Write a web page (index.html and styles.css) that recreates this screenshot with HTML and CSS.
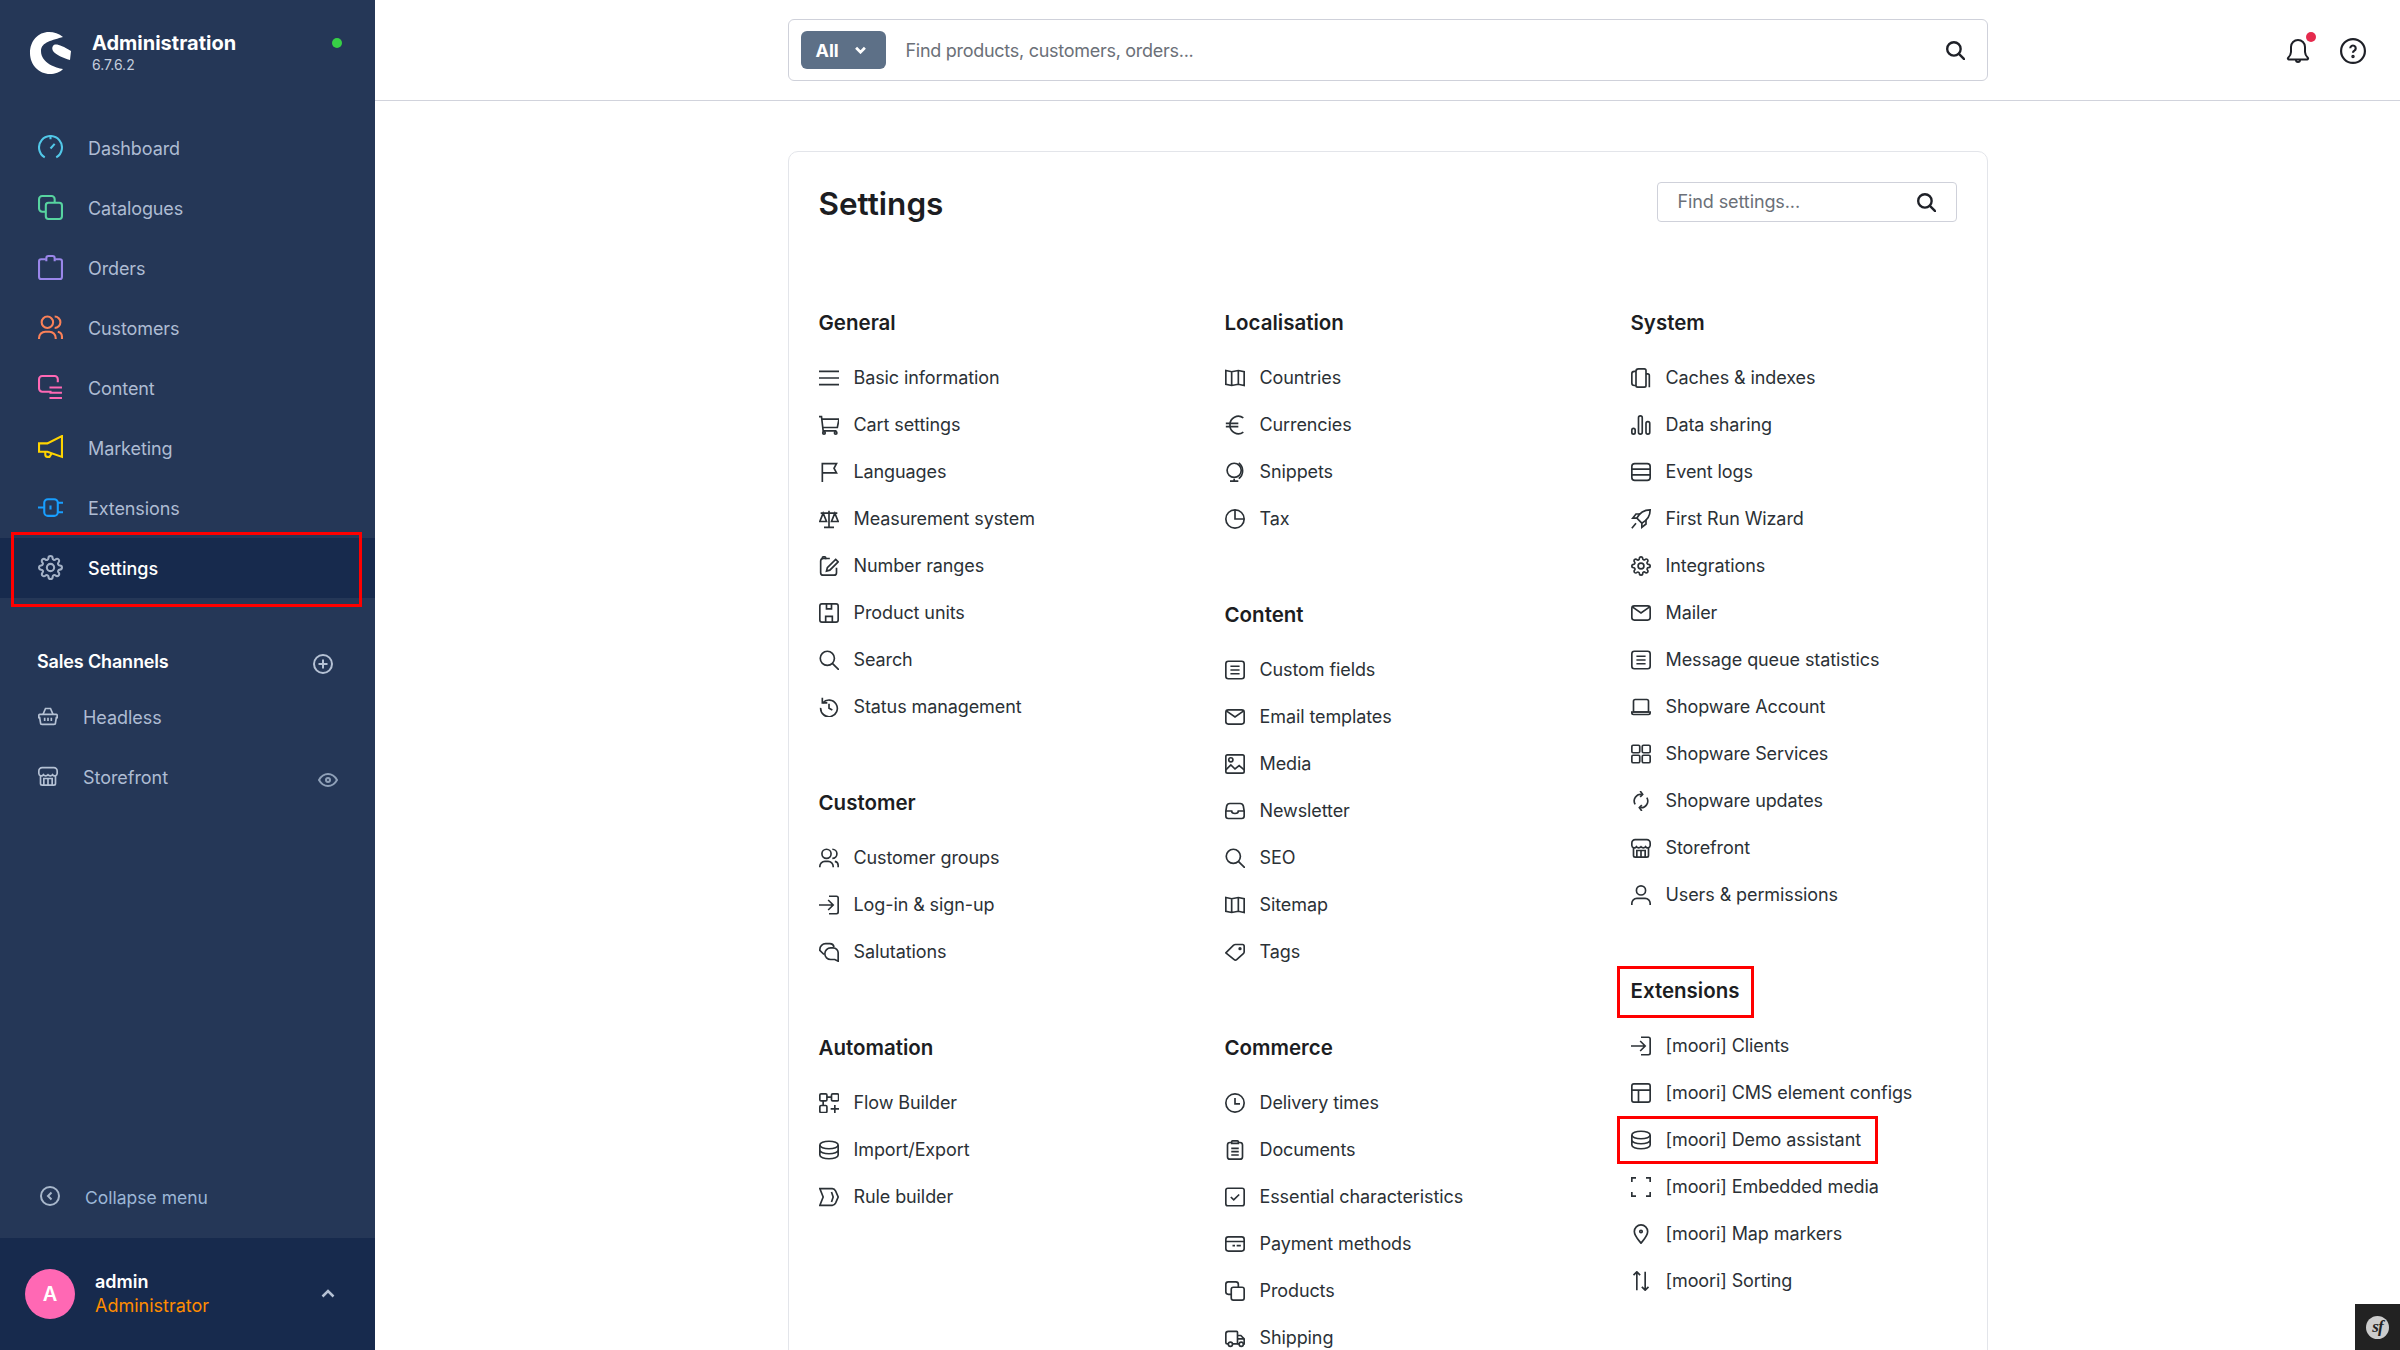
FILE: index.html
```html
<!DOCTYPE html>
<html lang="en">
<head>
<meta charset="utf-8">
<title>Settings | Shopware Administration</title>
<link rel="stylesheet" href="styles.css">
</head>
<body>
<svg class="sprite" aria-hidden="true">
  <symbol id="i-dash" viewBox="0 0 24 24"><path d="M6.500 21.500a11 11 0 1 1 11 0"/><path d="M12 1v3M12 13l4-4.500"/></symbol>
  <symbol id="i-copy" viewBox="0 0 24 24"><rect x="7.500" y="7.500" width="15.500" height="15.500" rx="2.500"/><path d="M16 7.500V4a3 3 0 0 0-3-3H4a3 3 0 0 0-3 3v9a3 3 0 0 0 3 3h3.500"/></symbol>
  <symbol id="i-bag" viewBox="0 0 24 24"><path d="M7.500 4H3a2 2 0 0 0-2 2v15a2 2 0 0 0 2 2h18a2 2 0 0 0 2-2V6a2 2 0 0 0-2-2h-4.500"/><path d="M8 6V3a2 2 0 0 1 2-2h4a2 2 0 0 1 2 2v3"/></symbol>
  <symbol id="i-users" viewBox="0 0 24 24"><circle cx="9" cy="7" r="5.500"/><path d="M16 1.500a5.500 5.500 0 0 1 0 11M1 23v-1a6 6 0 0 1 6-6h4a6 6 0 0 1 6 6v1M19 16a5 5 0 0 1 4 5v2"/></symbol>
  <symbol id="i-content" viewBox="0 0 24 24"><path d="M13 16H4a3 3 0 0 1-3-3V4a3 3 0 0 1 3-3h12a3 3 0 0 1 3 3v3"/><path d="M11 12h12M11 17h12M11 22h12"/></symbol>
  <symbol id="i-mega" viewBox="0 0 24 24"><path d="M23 1v20L9 16H1V8h8z"/><path d="M7 16v3a2 2 0 0 0 2 2h2l2-3"/></symbol>
  <symbol id="i-plug" viewBox="0 0 24 24"><rect x="6" y="4" width="13" height="16" rx="3.500"/><path d="M0 12h6M19 7.500h5M19 16.500h5M12 10v4"/></symbol>
  <symbol id="i-gear" viewBox="0 0 24 24"><circle cx="12" cy="12" r="3.500"/><path d="M19.400 15a1.650 1.650 0 0 0 .33 1.820l.06.06a2 2 0 0 1 0 2.830 2 2 0 0 1-2.830 0l-.06-.06a1.650 1.650 0 0 0-1.820-.33 1.650 1.650 0 0 0-1 1.510V21a2 2 0 0 1-2 2 2 2 0 0 1-2-2v-.09A1.650 1.650 0 0 0 9 19.400a1.650 1.650 0 0 0-1.820.33l-.06.06a2 2 0 0 1-2.830 0 2 2 0 0 1 0-2.830l.06-.06a1.650 1.650 0 0 0 .33-1.820 1.650 1.650 0 0 0-1.510-1H3a2 2 0 0 1-2-2 2 2 0 0 1 2-2h.09A1.650 1.650 0 0 0 4.600 9a1.650 1.650 0 0 0-.33-1.820l-.06-.06a2 2 0 0 1 0-2.830 2 2 0 0 1 2.830 0l.06.06a1.650 1.650 0 0 0 1.820.33H9a1.650 1.650 0 0 0 1-1.510V3a2 2 0 0 1 2-2 2 2 0 0 1 2 2v.09a1.650 1.650 0 0 0 1 1.510 1.650 1.650 0 0 0 1.820-.33l.06-.06a2 2 0 0 1 2.830 0 2 2 0 0 1 0 2.830l-.06.06a1.650 1.650 0 0 0-.33 1.820V9a1.650 1.650 0 0 0 1.510 1H21a2 2 0 0 1 2 2 2 2 0 0 1-2 2h-.09a1.650 1.650 0 0 0-1.510 1z"/></symbol>
  <symbol id="i-basket" viewBox="0 0 24 24"><path d="M2 10h20a1 1 0 0 1 1 1v3h-1l-1 6a2 2 0 0 1-2 2H5a2 2 0 0 1-2-2l-1-6H1v-3a1 1 0 0 1 1-1z"/><path d="M6 10l3-7h6l3 7M8 14v4M12 14v4M16 14v4"/></symbol>
  <symbol id="i-store" viewBox="0 0 24 24"><path d="M3 12v9a2 2 0 0 0 2 2h14a2 2 0 0 0 2-2v-9"/><path d="M1 6a4 4 0 0 1 4-4h14a4 4 0 0 1 4 4v3a3 3 0 0 1-5.500 1.500 3.500 3.500 0 0 1-5.500 0 3.500 3.500 0 0 1-5.500 0A3 3 0 0 1 1 9z"/><path d="M7 23v-8h10v8M12 15v8"/></symbol>
  <symbol id="i-menu" viewBox="0 0 24 24"><path d="M0 4h24M0 12h24M0 20h24"/></symbol>
  <symbol id="i-cart" viewBox="0 0 24 24"><path d="M0 2h3l2 17h16M4 5h20l-2 10H5"/><circle cx="6" cy="21.500" r="1.500"/><circle cx="20" cy="21.500" r="1.500"/></symbol>
  <symbol id="i-flag" viewBox="0 0 24 24"><path d="M4 24V2h17l-3 5.500 3 5.500H4"/></symbol>
  <symbol id="i-scale" viewBox="0 0 24 24"><path d="M12 2v19M6 22h12M2 5h20M5 5L1 15h8zM19 5l-4 10h8z"/></symbol>
  <symbol id="i-note" viewBox="0 0 24 24"><path d="M13 3H5a3 3 0 0 0-3 3v14a3 3 0 0 0 3 3h13a3 3 0 0 0 3-3v-6"/><path d="M4 4V2a1 1 0 0 1 1-1h2a1 1 0 0 1 1 1v2"/><path d="M20 4l3 3-10 10-4 1 1-4z"/></symbol>
  <symbol id="i-box" viewBox="0 0 24 24"><rect x="1" y="1" width="22" height="22" rx="2.500"/><path d="M9 1v6h6V1M8 23v-7h8v7"/></symbol>
  <symbol id="i-search" viewBox="0 0 24 24"><circle cx="10" cy="10" r="8.500"/><path d="M16 16l8 8"/></symbol>
  <symbol id="i-history" viewBox="0 0 24 24"><path d="M4 1v6h6"/><path d="M4.500 7A10 10 0 1 1 2 13"/><path d="M12 8v5.500l4 2"/></symbol>
  <symbol id="i-login" viewBox="0 0 24 24"><path d="M0 12h17M11 6l6 6-6 6"/><path d="M12 1.500h9a2 2 0 0 1 2 2v17a2 2 0 0 1-2 2h-9"/></symbol>
  <symbol id="i-chat" viewBox="0 0 24 24"><path d="M18 6a5 5 0 0 0-5-4H8a7 7 0 0 0-7 7v1l5 5"/><path d="M14 7h3a6 6 0 0 1 6 6v10l-4-2h-5a7 7 0 0 1 0-14z"/></symbol>
  <symbol id="i-flow" viewBox="0 0 24 24"><rect x="1" y="1" width="8.500" height="8.500" rx="1.500"/><rect x="15" y="1" width="8.500" height="8.500" rx="1.500"/><rect x="1" y="15" width="8.500" height="8.500" rx="1.500"/><path d="M5 9.500V15M9.500 5H15M19 14.500V24M14 19h10"/></symbol>
  <symbol id="i-db" viewBox="0 0 24 24"><ellipse cx="12" cy="6" rx="11" ry="4.500"/><path d="M1 6v12c0 2.500 5 4.500 11 4.500s11-2 11-4.500V6M1 12c0 2.500 5 4.500 11 4.500s11-2 11-4.500"/></symbol>
  <symbol id="i-rule" viewBox="0 0 24 24"><path d="M1 2h15c2 0 3 1 4 3l3 7-3 7c-1 2-2 3-4 3H1l4-10z"/><path d="M15 6l2 6-2 6"/></symbol>
  <symbol id="i-map" viewBox="0 0 24 24"><path d="M1 3l7 1.500L16 3l7 1.500V21l-7-1.500L8 21l-7-1.500zM8 4.500V21M16 3v16.500"/></symbol>
  <symbol id="i-euro" viewBox="0 0 24 24"><path d="M22 3.500A10 10 0 0 0 6 12a10 10 0 0 0 16 8.500"/><path d="M1 10h15M1 14h15"/></symbol>
  <symbol id="i-globe" viewBox="0 0 24 24"><circle cx="11" cy="10" r="8.500"/><path d="M16.500 1a12 12 0 0 1 0 19M11 20v3M6 23h10"/></symbol>
  <symbol id="i-pie" viewBox="0 0 24 24"><circle cx="12" cy="12" r="11"/><path d="M12 1v11h11"/></symbol>
  <symbol id="i-list" viewBox="0 0 24 24"><rect x="1" y="1.500" width="22" height="21" rx="3"/><path d="M6.500 7.500h11M6.500 12h11M6.500 16.500h11"/></symbol>
  <symbol id="i-mail" viewBox="0 0 24 24"><rect x="1" y="3.500" width="22" height="17" rx="3"/><path d="M2 5l10 7 10-7"/></symbol>
  <symbol id="i-image" viewBox="0 0 24 24"><rect x="1" y="1" width="22" height="22" rx="2"/><circle cx="7" cy="7" r="2.500"/><path d="M1 19l6-6 5 5 5-4 6 5"/></symbol>
  <symbol id="i-inbox" viewBox="0 0 24 24"><path d="M6 3h12a4 4 0 0 1 4 3l1 6v6a3 3 0 0 1-3 3H4a3 3 0 0 1-3-3v-6l1-6a4 4 0 0 1 4-3z"/><path d="M1 12h7c0 2 2 3 4 3s4-1 4-3h7"/></symbol>
  <symbol id="i-tag" viewBox="0 0 24 24"><path d="M1 13L10 4a4 4 0 0 1 3-1h8a2 2 0 0 1 2 2v7a3 3 0 0 1-1 2l-8 7a2 2 0 0 1-3 0z"/><circle cx="18" cy="8" r="1"/></symbol>
  <symbol id="i-clock" viewBox="0 0 24 24"><circle cx="12" cy="12" r="11"/><path d="M12 6v7h6"/></symbol>
  <symbol id="i-doc" viewBox="0 0 24 24"><path d="M8 3H6a3 3 0 0 0-3 3v14a3 3 0 0 0 3 3h12a3 3 0 0 0 3-3V6a3 3 0 0 0-3-3h-2"/><path d="M8 4V2a1 1 0 0 1 1-1h6a1 1 0 0 1 1 1v2zM7.500 10h9M7.500 14h9M7.500 18h9"/></symbol>
  <symbol id="i-check" viewBox="0 0 24 24"><rect x="1" y="1.500" width="22" height="21" rx="2.500"/><path d="M7 12l3.500 3.500L17 9"/></symbol>
  <symbol id="i-card" viewBox="0 0 24 24"><rect x="1" y="3.500" width="22" height="17" rx="3"/><path d="M1 9h22M9 14h3M14 14h5"/></symbol>
  <symbol id="i-truck" viewBox="0 0 24 24"><path d="M4 19H3a2 2 0 0 1-2-2V7a3 3 0 0 1 3-3h10a1 1 0 0 1 1 1v14H9"/><path d="M15 9h4l4 4v6h-1M15 13h8M15 19h2"/><circle cx="6.500" cy="19.500" r="2.500"/><circle cx="19.500" cy="19.500" r="2.500"/></symbol>
  <symbol id="i-caches" viewBox="0 0 24 24"><path d="M6 4a3 3 0 0 1 3-3h7a2 2 0 0 1 2 2v18a2 2 0 0 1-2 2H8a2 2 0 0 1-2-2z"/><path d="M6 4H4a3 3 0 0 0-3 3v11a3 3 0 0 0 3 3h2M18 7h2a2 2 0 0 1 2 2v14"/></symbol>
  <symbol id="i-bars" viewBox="0 0 24 24"><rect x="1" y="16" width="4" height="7" rx="2"/><rect x="9" y="1" width="4.500" height="22" rx="2.200"/><rect x="18" y="8" width="4.500" height="15" rx="2.200"/></symbol>
  <symbol id="i-server" viewBox="0 0 24 24"><rect x="1" y="2" width="22" height="20" rx="3.500"/><path d="M1 8.500h22M1 15.500h22"/></symbol>
  <symbol id="i-rocket" viewBox="0 0 24 24"><path d="M23 1C15 1 10 5 7 11l6 6c6-3 10-8 10-16z"/><path d="M7 11H2l4-5h5M13 17v5l5-4v-5M6 17l-5 6"/></symbol>
  <symbol id="i-laptop" viewBox="0 0 24 24"><path d="M5 3h14a2 2 0 0 1 2 2v13H3V5a2 2 0 0 1 2-2z"/><path d="M1 18h22v1a2 2 0 0 1-2 2H3a2 2 0 0 1-2-2z"/></symbol>
  <symbol id="i-grid" viewBox="0 0 24 24"><rect x="1" y="1.500" width="9.500" height="9" rx="1.500"/><rect x="13.500" y="1.500" width="9.500" height="9" rx="1.500"/><rect x="1" y="13.500" width="9.500" height="9" rx="1.500"/><rect x="13.500" y="13.500" width="9.500" height="9" rx="1.500"/></symbol>
  <symbol id="i-sync" viewBox="0 0 24 24"><path d="M5 16A8 8 0 0 1 13 4"/><path d="M11 0l3 4-3 3"/><path d="M19 8a8 8 0 0 1-8 12"/><path d="M13 17l-3 3 3 4"/></symbol>
  <symbol id="i-user" viewBox="0 0 24 24"><circle cx="12" cy="6.500" r="5.500"/><path d="M1 24v-2a6 6 0 0 1 6-6h10a6 6 0 0 1 6 6v2"/></symbol>
  <symbol id="i-layout" viewBox="0 0 24 24"><rect x="1" y="1" width="22" height="22" rx="2.500"/><path d="M1 8.500h22M9 8.500V23"/></symbol>
  <symbol id="i-corners" viewBox="0 0 24 24"><path d="M1 6V1h5M18 1h5v5M1 18v5h5M23 18v5h-5"/></symbol>
  <symbol id="i-pin" viewBox="0 0 24 24"><path d="M12 23c-4-5-8-9-8-14a8 8 0 0 1 16 0c0 5-4 9-8 14z"/><circle cx="12" cy="9" r="1.500"/></symbol>
  <symbol id="i-sort" viewBox="0 0 24 24"><path d="M7 23V1M3 5l4-4 4 4M17 1v22M13 19l4 4 4-4"/></symbol>
</svg>

<aside class="sidebar">
  <div class="brand">
    <svg class="logo" viewBox="0 0 42 43"><path d="M34 6C30 2.500 25 1 20 1 9 1 1 10 1 22s9 21 20 21c5 0 10-1.500 13-5-7-1-22-6-22-18C12 11 24 9 34 6zM24 15c2-3 8-1 18 5l-1 9c-7-2-14-5-17-9-1-2-1-4 0-5z"/></svg>
    <div class="brand-text">
      <div class="brand-name">Administration</div>
      <div class="brand-version">6.7.6.2</div>
    </div>
    <span class="status-dot"></span>
  </div>
  <nav class="nav">
    <a class="nav-item"><svg class="nav-icon c-dash"><use href="#i-dash"/></svg>Dashboard</a>
    <a class="nav-item"><svg class="nav-icon c-cat"><use href="#i-copy"/></svg>Catalogues</a>
    <a class="nav-item"><svg class="nav-icon c-ord"><use href="#i-bag"/></svg>Orders</a>
    <a class="nav-item"><svg class="nav-icon c-cus"><use href="#i-users"/></svg>Customers</a>
    <a class="nav-item"><svg class="nav-icon c-con"><use href="#i-content"/></svg>Content</a>
    <a class="nav-item"><svg class="nav-icon c-mar"><use href="#i-mega"/></svg>Marketing</a>
    <a class="nav-item"><svg class="nav-icon c-ext"><use href="#i-plug"/></svg>Extensions</a>
    <a class="nav-item is-active mark mark-nav"><svg class="nav-icon c-set"><use href="#i-gear"/></svg>Settings</a>
  </nav>
  <div class="channels-head">
    <span>Sales Channels</span>
    <svg class="plus" viewBox="0 0 20 20"><circle cx="10" cy="10" r="9"/><path d="M10 5.500v9M5.500 10h9"/></svg>
  </div>
  <a class="channel"><svg class="channel-icon"><use href="#i-basket"/></svg>Headless</a>
  <a class="channel"><svg class="channel-icon"><use href="#i-store"/></svg>Storefront<svg class="eye" viewBox="0 0 20 14"><path d="M1 7c2-3.500 5-6 9-6s7 2.500 9 6c-2 3.500-5 6-9 6s-7-2.500-9-6z"/><circle cx="10" cy="7" r="2"/></svg></a>
  <a class="collapse"><svg class="collapse-icon" viewBox="0 0 20 20"><circle cx="10" cy="10" r="9"/><path d="M11.500 6.500L8 10l3.500 3.500"/></svg>Collapse menu</a>
  <div class="account">
    <div class="avatar">A</div>
    <div class="account-text">
      <div class="account-name">admin</div>
      <div class="account-role">Administrator</div>
    </div>
    <svg class="account-chevron" viewBox="0 0 14 9"><path d="M1.500 7.500L7 2l5.500 5.500"/></svg>
  </div>
</aside>

<main class="main">
  <header class="topbar">
    <div class="global-search">
      <div class="scope">All<svg class="scope-chevron" viewBox="0 0 10 7"><path d="M1 1.500l4 4 4-4"/></svg></div>
      <div class="global-placeholder">Find products, customers, orders...</div>
      <svg class="search-icon"><use href="#i-search"/></svg>
    </div>
    <div class="top-actions">
      <div class="bell">
        <svg class="top-icon" viewBox="0 0 24 26"><path d="M2 20c2-2 3-3 3-6V9a7 7 0 0 1 14 0v5c0 3 1 4 3 6a1 1 0 0 1-1 1.500H3A1 1 0 0 1 2 20z"/><path d="M10 22a2 2 0 0 0 4 0"/></svg>
        <span class="bell-dot"></span>
      </div>
      <svg class="top-icon" viewBox="0 0 24 24"><circle cx="12" cy="12" r="11"/><path d="M9.500 9.500a2.500 2.500 0 1 1 3.800 2.100c-.8.500-1.300 1-1.300 2"/><circle class="fill" cx="12" cy="17" r=".6"/></svg>
    </div>
  </header>

  <section class="card">
    <div class="card-head">
      <h1 class="page-title">Settings</h1>
      <div class="settings-search">
        <span class="settings-placeholder">Find settings...</span>
        <svg class="search-icon"><use href="#i-search"/></svg>
      </div>
    </div>
    <div class="columns">
      <div class="column">
        <div class="group">
          <h2 class="group-title">General</h2>
          <a class="item"><svg class="item-icon"><use href="#i-menu"/></svg>Basic information</a>
          <a class="item"><svg class="item-icon"><use href="#i-cart"/></svg>Cart settings</a>
          <a class="item"><svg class="item-icon"><use href="#i-flag"/></svg>Languages</a>
          <a class="item"><svg class="item-icon"><use href="#i-scale"/></svg>Measurement system</a>
          <a class="item"><svg class="item-icon"><use href="#i-note"/></svg>Number ranges</a>
          <a class="item"><svg class="item-icon"><use href="#i-box"/></svg>Product units</a>
          <a class="item"><svg class="item-icon"><use href="#i-search"/></svg>Search</a>
          <a class="item"><svg class="item-icon"><use href="#i-history"/></svg>Status management</a>
        </div>
        <div class="group">
          <h2 class="group-title">Customer</h2>
          <a class="item"><svg class="item-icon"><use href="#i-users"/></svg>Customer groups</a>
          <a class="item"><svg class="item-icon"><use href="#i-login"/></svg>Log-in &amp; sign-up</a>
          <a class="item"><svg class="item-icon"><use href="#i-chat"/></svg>Salutations</a>
        </div>
        <div class="group">
          <h2 class="group-title">Automation</h2>
          <a class="item"><svg class="item-icon"><use href="#i-flow"/></svg>Flow Builder</a>
          <a class="item"><svg class="item-icon"><use href="#i-db"/></svg>Import/Export</a>
          <a class="item"><svg class="item-icon"><use href="#i-rule"/></svg>Rule builder</a>
        </div>
      </div>
      <div class="column">
        <div class="group">
          <h2 class="group-title">Localisation</h2>
          <a class="item"><svg class="item-icon"><use href="#i-map"/></svg>Countries</a>
          <a class="item"><svg class="item-icon"><use href="#i-euro"/></svg>Currencies</a>
          <a class="item"><svg class="item-icon"><use href="#i-globe"/></svg>Snippets</a>
          <a class="item"><svg class="item-icon"><use href="#i-pie"/></svg>Tax</a>
        </div>
        <div class="group">
          <h2 class="group-title">Content</h2>
          <a class="item"><svg class="item-icon"><use href="#i-list"/></svg>Custom fields</a>
          <a class="item"><svg class="item-icon"><use href="#i-mail"/></svg>Email templates</a>
          <a class="item"><svg class="item-icon"><use href="#i-image"/></svg>Media</a>
          <a class="item"><svg class="item-icon"><use href="#i-inbox"/></svg>Newsletter</a>
          <a class="item"><svg class="item-icon"><use href="#i-search"/></svg>SEO</a>
          <a class="item"><svg class="item-icon"><use href="#i-map"/></svg>Sitemap</a>
          <a class="item"><svg class="item-icon"><use href="#i-tag"/></svg>Tags</a>
        </div>
        <div class="group">
          <h2 class="group-title">Commerce</h2>
          <a class="item"><svg class="item-icon"><use href="#i-clock"/></svg>Delivery times</a>
          <a class="item"><svg class="item-icon"><use href="#i-doc"/></svg>Documents</a>
          <a class="item"><svg class="item-icon"><use href="#i-check"/></svg>Essential characteristics</a>
          <a class="item"><svg class="item-icon"><use href="#i-card"/></svg>Payment methods</a>
          <a class="item"><svg class="item-icon"><use href="#i-copy"/></svg>Products</a>
          <a class="item"><svg class="item-icon"><use href="#i-truck"/></svg>Shipping</a>
        </div>
      </div>
      <div class="column">
        <div class="group">
          <h2 class="group-title">System</h2>
          <a class="item"><svg class="item-icon"><use href="#i-caches"/></svg>Caches &amp; indexes</a>
          <a class="item"><svg class="item-icon"><use href="#i-bars"/></svg>Data sharing</a>
          <a class="item"><svg class="item-icon"><use href="#i-server"/></svg>Event logs</a>
          <a class="item"><svg class="item-icon"><use href="#i-rocket"/></svg>First Run Wizard</a>
          <a class="item"><svg class="item-icon"><use href="#i-gear"/></svg>Integrations</a>
          <a class="item"><svg class="item-icon"><use href="#i-mail"/></svg>Mailer</a>
          <a class="item"><svg class="item-icon"><use href="#i-list"/></svg>Message queue statistics</a>
          <a class="item"><svg class="item-icon"><use href="#i-laptop"/></svg>Shopware Account</a>
          <a class="item"><svg class="item-icon"><use href="#i-grid"/></svg>Shopware Services</a>
          <a class="item"><svg class="item-icon"><use href="#i-sync"/></svg>Shopware updates</a>
          <a class="item"><svg class="item-icon"><use href="#i-store"/></svg>Storefront</a>
          <a class="item"><svg class="item-icon"><use href="#i-user"/></svg>Users &amp; permissions</a>
        </div>
        <div class="group">
          <h2 class="group-title mark mark-title">Extensions</h2>
          <a class="item"><svg class="item-icon"><use href="#i-login"/></svg>[moori] Clients</a>
          <a class="item"><svg class="item-icon"><use href="#i-layout"/></svg>[moori] CMS element configs</a>
          <a class="item mark mark-item"><svg class="item-icon"><use href="#i-db"/></svg>[moori] Demo assistant</a>
          <a class="item"><svg class="item-icon"><use href="#i-corners"/></svg>[moori] Embedded media</a>
          <a class="item"><svg class="item-icon"><use href="#i-pin"/></svg>[moori] Map markers</a>
          <a class="item"><svg class="item-icon"><use href="#i-sort"/></svg>[moori] Sorting</a>
        </div>
      </div>
    </div>
  </section>
</main>

<div class="sf-toolbar"><span class="sf-badge">sf</span></div>
</body>
</html>
```

FILE: styles.css
```css
* { box-sizing: border-box; }

html, body {
  height: 100%;
}

body {
  margin: 0;
  height: 1350px;
  display: flex;
  overflow: hidden;
  background: #fff;
  font-family: Inter, "Noto Sans", sans-serif;
  font-size: 18px;
  color: #2b3136;
}

a { color: inherit; text-decoration: none; }
h1, h2 { margin: 0; }

.sprite { display: none; }

svg { fill: none; stroke: currentColor; stroke-width: 2; flex: none; }

/* Sidebar */
.sidebar {
  width: 375px;
  flex: none;
  height: 1350px;
  display: flex;
  flex-direction: column;
  background: #253757;
  color: #aebcd3;
}

.brand {
  height: 118px;
  flex: none;
  display: flex;
  align-items: flex-start;
  padding: 31px 33px 0 29px;
}

.logo { width: 42px; height: 43px; fill: #fff; stroke: none; }

.brand-text { margin-left: 21px; flex: 1; }

.brand-name {
  font-size: 20px;
  font-weight: 700;
  line-height: 24px;
  color: #fff;
}

.brand-version {
  font-size: 14px;
  line-height: 20px;
  color: #c3cede;
}

.status-dot {
  width: 10px;
  height: 10px;
  margin-top: 7px;
  border-radius: 50%;
  background: #37d046;
}

.nav { display: flex; flex-direction: column; }

.nav-item {
  position: relative;
  height: 60px;
  display: flex;
  align-items: center;
  gap: 25px;
  padding-left: 38px;
  letter-spacing: -0.1px;
}

.nav-icon { width: 25px; height: 25px; margin-top: -2px; }
.c-dash { color: #52c8e8; }
.c-cat { color: #57d4a0; }
.c-ord { color: #9a86ea; }
.c-cus { color: #fb8158; }
.c-con { color: #ff68b4; }
.c-mar { color: #ffd400; }
.c-ext { color: #189eff; }
.c-set { color: #a3b1c6; }

.is-active {
  background: #172a4d;
  color: #fff;
  font-weight: 500;
  letter-spacing: 0;
}

.channels-head {
  height: 89px;
  flex: none;
  display: flex;
  align-items: flex-end;
  justify-content: space-between;
  padding: 0 42px 15px 37px;
  font-weight: 600;
  letter-spacing: -0.15px;
  color: #fff;
}

.plus { width: 20px; height: 20px; color: #b5c1d4; margin-bottom: -2px; }

.channel {
  height: 60px;
  flex: none;
  display: flex;
  align-items: center;
  gap: 25px;
  padding: 0 38px;
  letter-spacing: -0.05px;
}

.channel-icon { width: 20px; height: 20px; margin-top: -2px; color: #b5c1d4; }

.eye { width: 20px; height: 14px; margin-left: auto; margin-right: -1px; margin-top: 6px; color: #8fa0b8; }

.collapse {
  margin-top: auto;
  height: 60px;
  flex: none;
  margin-bottom: 11px;
  display: flex;
  align-items: center;
  gap: 25px;
  padding-left: 40px;
  font-size: 17.500px;
  color: #9cb6d6;
}

.collapse-icon { width: 20px; height: 20px; margin-top: -2px; color: #a8b7cb; }

.account {
  height: 112px;
  flex: none;
  display: flex;
  align-items: center;
  padding: 0 40px 0 25px;
  background: #172a4d;
}

.avatar {
  width: 50px;
  height: 50px;
  flex: none;
  border-radius: 50%;
  display: flex;
  align-items: center;
  justify-content: center;
  background: #ff68b4;
  color: #fff;
  font-size: 20px;
  font-weight: 600;
}

.account-text { margin-left: 20px; flex: 1; }

.account-name {
  font-weight: 600;
  line-height: 24px;
  color: #fff;
}

.account-role {
  line-height: 24px;
  color: #ff8c00;
}

.account-chevron { width: 14px; height: 9px; margin-top: -2px; stroke-width: 2.500; color: #b5c1d4; }

/* Main */
.main {
  flex: 1;
  min-width: 0;
  height: 1350px;
  overflow: hidden;
}

.topbar {
  height: 101px;
  display: grid;
  grid-template-columns: 1fr 1200px 1fr;
  border-bottom: 1px solid #d1d3dc;
  padding-top: 19px;
}

.global-search {
  grid-column: 2;
  height: 62px;
  display: flex;
  align-items: center;
  padding: 0 22px 0 12px;
  border: 1px solid #cfd1da;
  border-radius: 6px;
}

.scope {
  width: 85px;
  height: 38px;
  flex: none;
  display: flex;
  align-items: center;
  gap: 16px;
  padding-left: 15px;
  border-radius: 6px;
  background: #5d7087;
  color: #fff;
  font-weight: 700;
}

.scope-chevron { width: 11px; height: 8px; stroke-width: 2.500; }

.global-placeholder {
  flex: 1;
  margin-left: 20px;
  letter-spacing: -0.28px;
  color: #6b7078;
}

.search-icon { width: 19px; height: 19px; stroke-width: 3; color: #1e2027; }

.top-actions {
  display: flex;
  justify-content: flex-end;
  align-items: flex-start;
  gap: 29px;
  padding-top: 19px;
  padding-right: 34px;
}

.bell { position: relative; width: 26px; height: 26px; }

.top-icon { width: 26px; height: 26px; color: #1e2027; }
.top-icon .fill { fill: currentColor; }

.bell-dot {
  position: absolute;
  top: -6px;
  right: -5px;
  width: 10px;
  height: 10px;
  border-radius: 50%;
  background: #e52a4d;
}

.card {
  width: 1200px;
  margin: 50px auto 0;
  height: 1300px;
  padding: 30px 30px 0;
  border: 1px solid #e3e5ea;
  border-radius: 10px;
  background: #fff;
}

.card-head {
  display: flex;
  align-items: center;
  justify-content: space-between;
  height: 40px;
  margin-bottom: 87px;
}

.page-title {
  margin-top: 2px;
  font-size: 31.500px;
  font-weight: 600;
  color: #1c1d22;
}

.settings-search {
  width: 300px;
  height: 40px;
  display: flex;
  align-items: center;
  justify-content: space-between;
  padding: 0 20px 0 20px;
  border: 1px solid #cfd1da;
  border-radius: 4px;
}

.settings-placeholder { letter-spacing: -0.1px; margin-top: -1px; color: #6b7078; }

.columns {
  display: grid;
  grid-template-columns: repeat(3, 326px);
  column-gap: 80px;
}

.column {
  display: flex;
  flex-direction: column;
  gap: 59px;
}

.group-title {
  position: relative;
  height: 28px;
  margin-bottom: 17px;
  font-size: 20.500px;
  font-weight: 600;
  line-height: 28px;
  color: #1c1d22;
}

.item {
  position: relative;
  height: 47px;
  display: flex;
  align-items: center;
  gap: 15px;
  letter-spacing: -0.1px;
}

.item-icon { width: 20px; height: 20px; }

/* Red review marks drawn over the screenshot */
.mark::after {
  content: "";
  position: absolute;
  box-sizing: border-box;
  border: 3px solid #f00;
  pointer-events: none;
}

.mark-nav::after { left: 11px; right: 13px; top: -6px; bottom: -9px; }
.mark-title::after { left: -14px; width: 137px; top: -11px; bottom: -13px; }
.mark-item::after { left: -14px; width: 261px; top: 0; bottom: -1px; }

.sf-toolbar {
  position: fixed;
  right: 0;
  bottom: 0;
  width: 45px;
  height: 46px;
  display: flex;
  align-items: center;
  justify-content: center;
  background: #222;
}

.sf-badge {
  width: 23px;
  height: 23px;
  display: flex;
  align-items: center;
  justify-content: center;
  border-radius: 50%;
  background: #ccc;
  color: #222;
  font-family: "Liberation Serif", serif;
  font-size: 17px;
  font-style: italic;
  font-weight: 700;
  letter-spacing: -1px;
}
```
